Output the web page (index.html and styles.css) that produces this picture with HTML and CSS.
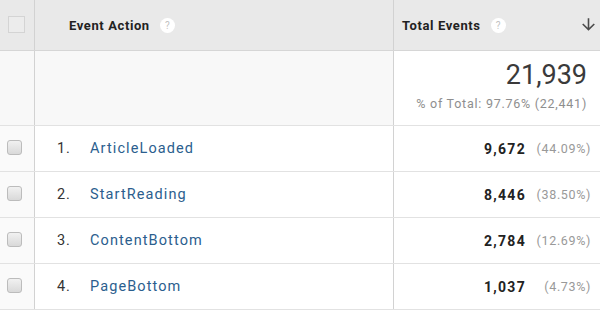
FILE: index.html
```html
<!DOCTYPE html>
<html>
<head>
<meta charset="utf-8">
<link rel="stylesheet" href="styles.css">
</head>
<body>
<div class="table">
  <div class="row head">
    <div class="cell chk"><span class="hbox"></span></div>
    <div class="cell dim"><span class="htext">Event Action</span><span class="help">?</span></div>
    <div class="cell metric"><span class="htext">Total Events</span><span class="help">?</span>
      <svg class="arrow" viewBox="0 0 24 24" width="19" height="19"><path d="M20 12l-1.41-1.41L13 16.17V4h-2v12.17l-5.58-5.59L4 12l8 8 8-8z"/></svg>
    </div>
  </div>
  <div class="row total">
    <div class="cell chk"></div>
    <div class="cell dim"></div>
    <div class="cell tot">
      <div class="big">21,939</div>
      <div class="pct-total">% of Total: 97.76% (22,441)</div>
    </div>
  </div>
  <div class="row data">
    <div class="cell chk"><span class="box"></span></div>
    <div class="cell dim"><span class="num">1.</span><span class="name">ArticleLoaded</span></div>
    <div class="cell val"><span class="v">9,672</span><span class="p">(44.09%)</span></div>
  </div>
  <div class="row data">
    <div class="cell chk"><span class="box"></span></div>
    <div class="cell dim"><span class="num">2.</span><span class="name">StartReading</span></div>
    <div class="cell val"><span class="v">8,446</span><span class="p">(38.50%)</span></div>
  </div>
  <div class="row data">
    <div class="cell chk"><span class="box"></span></div>
    <div class="cell dim"><span class="num">3.</span><span class="name">ContentBottom</span></div>
    <div class="cell val"><span class="v">2,784</span><span class="p">(12.69%)</span></div>
  </div>
  <div class="row data">
    <div class="cell chk"><span class="box"></span></div>
    <div class="cell dim"><span class="num">4.</span><span class="name">PageBottom</span></div>
    <div class="cell val"><span class="v">1,037</span><span class="p">(4.73%)</span></div>
  </div>
</div>
</body>
</html>
```

FILE: styles.css
```css
* { box-sizing: border-box; }
html, body { margin: 0; padding: 0; background: #fff; }
body { font-family: Roboto, "Liberation Sans", sans-serif; color: #333; }

.table { width: 600px; }
.row {
  display: grid;
  grid-template-columns: 35px 359px 206px;
  border-bottom: 1px solid #e2e2e2;
}
.cell { display: flex; align-items: center; }
.cell.chk { border-right: 1px solid #d2d2d2; justify-content: flex-start; }
.cell.dim { border-right: 1px solid #d2d2d2; }

.head { height: 51px; background: #e9e9e9; border-bottom-color: #d6d6d6; }
.head .chk { padding-left: 8px; }
.hbox { width: 17px; height: 17px; border: 1px solid #d4d4d4; background: #ececec; margin-top: -2px; }
.htext { font-weight: 700; font-size: 13px; color: #222; letter-spacing: 0.6px; }
.head .dim { padding-left: 34px; }
.head .metric { padding-left: 8px; padding-right: 2px; }
.help {
  width: 15px; height: 15px; border-radius: 50%; background: #fff;
  color: #c2c2c2; font-size: 10px; display: flex; align-items: center; justify-content: center;
  margin-left: 10px;
}
.arrow { margin-left: auto; fill: #4a4a4a; margin-top: -1px; }

.total { height: 75px; background: #f8f8f8; }
.tot { background: #fff; flex-direction: column; align-items: flex-end; justify-content: flex-start; padding-right: 13px; padding-top: 9px; }
.big { font-size: 27px; color: #3a3a3a; letter-spacing: 0; line-height: 30px; }
.pct-total { font-size: 12.5px; color: #8e8e8e; letter-spacing: 0.75px; margin-top: 7px; line-height: 14px; }

.data { height: 46px; }
.data .chk { padding-left: 7px; background: #fafafa; }
.box {
  width: 15px; height: 15px; border: 1px solid #bcbcbc; border-radius: 3px;
  background: linear-gradient(#f1f1f1, #d9d9d9); margin-top: -3px;
}
.data .dim { padding-left: 22px; }
.num { font-size: 14.5px; color: #333; width: 33px; letter-spacing: 0.8px; }
.name { font-size: 14.5px; color: #2b5e8e; letter-spacing: 1.1px; }
.val { justify-content: flex-end; padding-right: 9px; }
.v { font-size: 14px; font-weight: 700; color: #222; letter-spacing: 1.3px; }
.p { font-size: 12.5px; color: #999; width: 65px; text-align: right; letter-spacing: 0.65px; }
```
